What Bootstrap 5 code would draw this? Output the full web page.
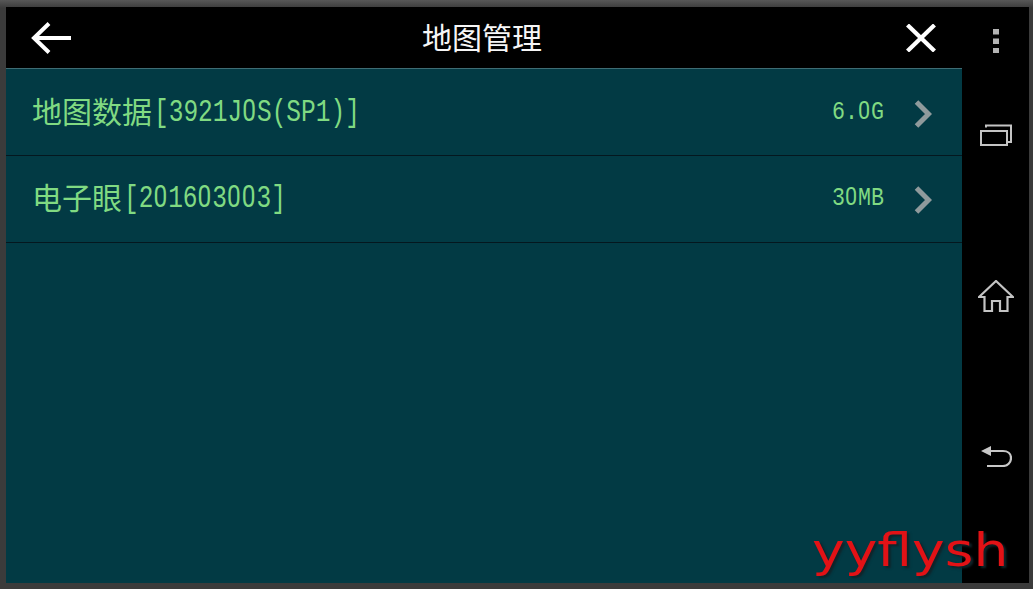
<!DOCTYPE html>
<html lang="zh">
<head>
    <meta charset="UTF-8">
    <meta name="viewport" content="width=device-width, initial-scale=1.0">
    <title>地图管理</title>
    <link href="https://cdn.jsdelivr.net/npm/bootstrap@5.3.0/dist/css/bootstrap.min.css" rel="stylesheet">
    <style>
        html, body { height: 100%; }
        body { background: #3d3d3d; overflow: hidden; font-family: "Noto Sans CJK SC", "Liberation Sans", sans-serif; }
        .frame { height: 589px; padding: 7px 4px 6px 6px; background: linear-gradient(#575757, #3b3b3b 8px); }
        .shell { height: 100%; background: #000; position: relative; }
        .main-col { width: 956px; }
        .top-bar { height: 61px; background: #000; }
        .bar-left { flex: 0 0 106px; padding-left: 25px; }
        .bar-right { flex: 0 0 110px; padding-left: 54px; }
        .bar-title { color: #f6f6f6; font-size: 30px; line-height: 1; margin-bottom: 4px; }
        .map-list { background: #023a44; border-top: 1px solid #3f6c74; }
        .map-list .list-group-item { height: 87px; padding: 0 30px 0 26px; background: transparent; border: 0; border-bottom: 1px solid #04171f; border-radius: 0; color: #80da82; }
        .map-list .list-group-item:last-child { border-bottom: 1px solid #04171f; padding-bottom: 2px; }
        .cjk-text { font-size: 30px; line-height: 1; margin-right: 2px; margin-bottom: 4px; }
        .mono-text { display: inline-block; font-family: "Liberation Mono", monospace; font-size: 24.5px; line-height: 1; transform: scaleY(1.3); }
        .size-text { display: inline-block; font-family: "Liberation Mono", monospace; font-size: 21.6px; line-height: 1; transform: scaleY(1.15); margin-right: 30px; }
        .plain-zero { font-family: Roboto, sans-serif; letter-spacing: .04em; }
        .row-arrow { margin-top: 3px; }
        .nav-col { width: 67px; padding-top: 22px; }
        .nav-recent { margin-top: 71px; }
        .nav-home { margin-top: 134px; }
        .nav-back { margin-top: 132px; }
        .watermark { position: absolute; left: 806px; top: 516px; color: #e21216; font-family: "DejaVu Sans", sans-serif; font-size: 46px; line-height: 1.2; transform: scaleX(1.2); transform-origin: left center; text-shadow: 2px 2px 2px #10242a; }
    </style>
</head>
<body>
    <div class="frame">
        <div class="shell d-flex">
            <div class="main-col d-flex flex-column">
                <div class="top-bar d-flex align-items-center">
                    <div class="bar-left d-flex">
                        <svg width="40" height="32" viewBox="0 0 40 32" fill="none" stroke="#fff" stroke-width="4"><path d="M40 16H3"/><path d="M18 1.500L3 16l15 14.500"/></svg>
                    </div>
                    <div class="bar-title flex-grow-1 text-center">地图管理</div>
                    <div class="bar-right d-flex">
                        <svg width="30" height="28" viewBox="0 0 30 28" fill="none" stroke="#fff" stroke-width="4.2"><path d="M1.500 1L28.500 27"/><path d="M28.500 1L1.500 27"/></svg>
                    </div>
                </div>
                <div class="map-list list-group list-group-flush flex-grow-1">
                    <div class="list-group-item d-flex align-items-center">
                        <span class="cjk-text">地图数据</span><span class="mono-text">[3921J<span class="plain-zero">0</span>S(SP1)]</span>
                        <span class="size-text ms-auto">6.<span class="plain-zero">0</span>G</span>
                        <svg class="row-arrow" width="18" height="28" viewBox="0 0 18 28" fill="none" stroke="#8f9a9c" stroke-width="5"><path d="M2.500 2L14.500 14 2.500 26"/></svg>
                    </div>
                    <div class="list-group-item d-flex align-items-center">
                        <span class="cjk-text">电子眼</span><span class="mono-text">[2<span class="plain-zero">0</span>16<span class="plain-zero">0</span>3<span class="plain-zero">00</span>3]</span>
                        <span class="size-text ms-auto">3<span class="plain-zero">0</span>MB</span>
                        <svg class="row-arrow" width="18" height="28" viewBox="0 0 18 28" fill="none" stroke="#8f9a9c" stroke-width="5"><path d="M2.500 2L14.500 14 2.500 26"/></svg>
                    </div>
                </div>
            </div>
            <div class="nav-col d-flex flex-column align-items-center">
                <svg width="6" height="24" viewBox="0 0 6 24" fill="#b4b4b4"><rect width="6" height="5.500" y="0"/><rect width="6" height="5.500" y="9.500"/><rect width="6" height="5.500" y="19"/></svg>
                <svg class="nav-recent" width="32" height="22" viewBox="0 0 32 22" fill="none" stroke="#c4c4c4" stroke-width="2"><rect x="1" y="7" width="26" height="14"/><path d="M6 3.500V1.500H31V18H28"/></svg>
                <svg class="nav-home" width="36" height="32" viewBox="0 0 36 32" fill="none" stroke="#c4c4c4" stroke-width="2.200"><path d="M1 17L18 1l17 16h-5.500v14H22V21h-8v10H6.500V17z"/></svg>
                <svg class="nav-back" width="32" height="23" viewBox="0 0 32 23" fill="none" stroke="#c8c8c8" stroke-width="2.200"><path d="M10 7H23c4.500 0 8 2.500 8 7s-3.500 8-8 8H7"/><path d="M1 7L11 2v10z" fill="#c8c8c8" stroke="none"/></svg>
            </div>
            <div class="watermark">yyflysh</div>
        </div>
    </div>
    <script src="https://cdn.jsdelivr.net/npm/bootstrap@5.3.0/dist/js/bootstrap.bundle.min.js"></script>
</body>
</html>
